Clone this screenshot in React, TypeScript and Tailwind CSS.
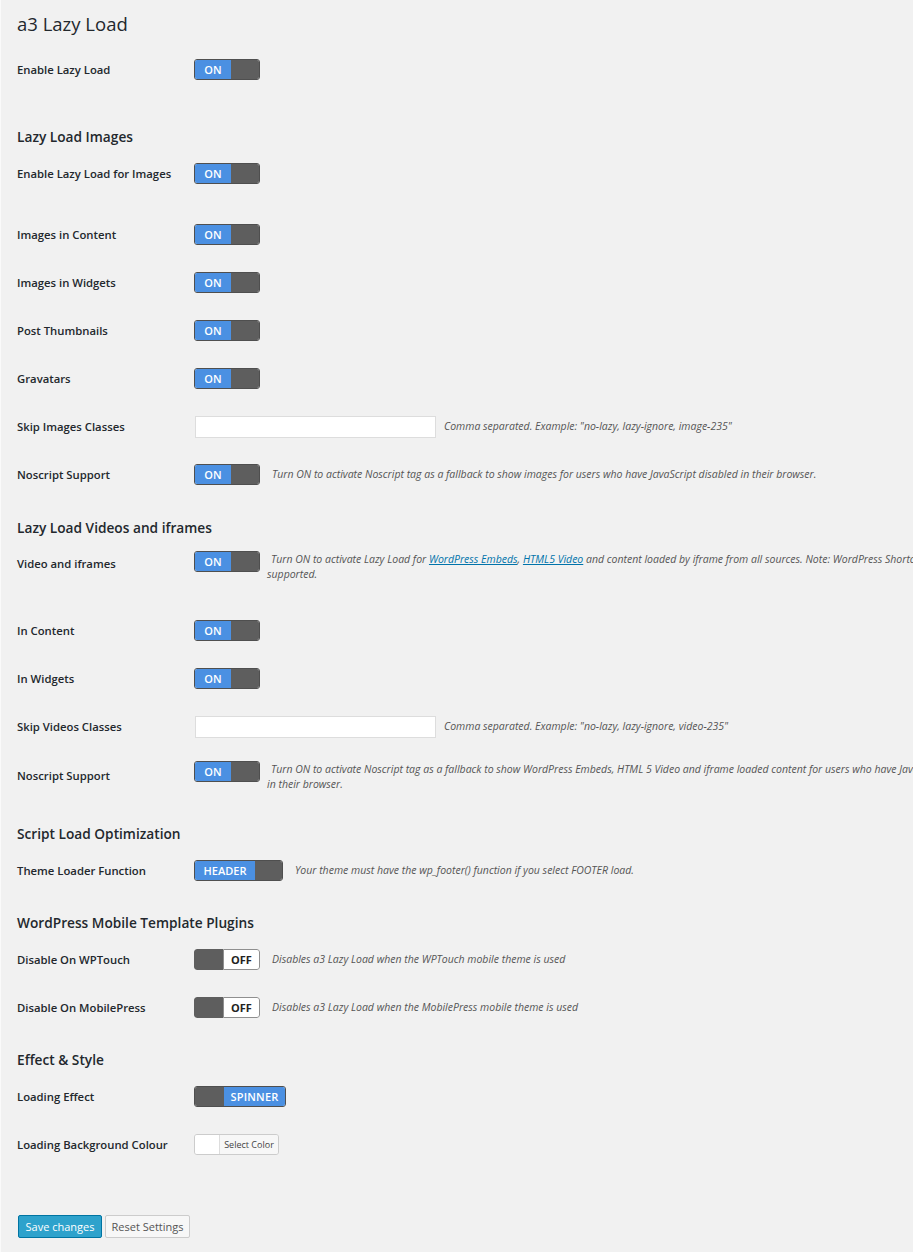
import React from 'react';

type ToggleKind = 'on' | 'off' | 'header' | 'spinner';

function Toggle({ kind }: { kind: ToggleKind }) {
  if (kind === 'off') {
    return (
      <div className="flex h-[21px] w-[66px] rounded-[3px] overflow-hidden">
        <div className="w-[29px] bg-[#5e5e5e] rounded-l-[3px]" />
        <div className="flex-1 flex items-center justify-center bg-white border border-[#8f8f8f] rounded-r-[3px] text-[11px] font-bold text-[#222] leading-none">
          OFF
        </div>
      </div>
    );
  }
  if (kind === 'spinner') {
    return (
      <div className="flex h-[21px] w-[92px] rounded-[3px] overflow-hidden border border-[#4f4f4f]">
        <div className="w-[29px] bg-[#5e5e5e]" />
        <div className="flex-1 flex items-center justify-center bg-[#4b90e2] text-[11px] font-semibold text-white leading-none tracking-[0.2px]">
          SPINNER
        </div>
      </div>
    );
  }
  const header = kind === 'header';
  return (
    <div
      className={`flex h-[21px] rounded-[3px] overflow-hidden border border-[#4f4f4f] ${
        header ? 'w-[89px]' : 'w-[66px]'
      }`}
    >
      <div
        className={`flex items-center justify-center bg-[#4b90e2] text-[11px] font-semibold text-white leading-none ${
          header ? 'w-[60px]' : 'w-[36px]'
        }`}
      >
        {header ? 'HEADER' : 'ON'}
      </div>
      <div className="flex-1 bg-[#5e5e5e]" />
    </div>
  );
}

function Desc({ children, wide }: { children: React.ReactNode; wide?: boolean }) {
  return (
    <div
      className={`text-[10.5px] italic leading-[15px] text-[#555] ${
        wide ? 'w-[726px] shrink-0 ml-[7px] indent-[4px] pt-[1px]' : 'ml-[12px]'
      }`}
    >
      {children}
    </div>
  );
}

function Row({
  label,
  children,
}: {
  label: string;
  children: React.ReactNode;
}) {
  return (
    <div className="flex h-[48px]">
      <div className="w-[177px] shrink-0 pt-[14px] text-[11.3px] font-semibold leading-[20px] text-[#23282d]">
        {label}
      </div>
      <div className="flex items-center h-[47px]">{children}</div>
    </div>
  );
}

function Heading({ children, className = '' }: { children: React.ReactNode; className?: string }) {
  return (
    <div
      className={`h-[26px] flex items-center text-[13.7px] font-semibold text-[#23282d] ${className}`}
    >
      {children}
    </div>
  );
}

function TextInput() {
  return <div className="h-[22px] w-[241px] bg-white border border-[#dddddd] ml-[1px]" />;
}

export default function App() {
  return (
    <div className="min-h-[1252px] w-[913px] overflow-hidden bg-[#f1f1f1] border-l border-[#fafafa] pl-[16px] font-['Open_Sans',sans-serif]">
      <h1 className="pt-[10px] h-[46px] text-[18.5px] leading-[28px] font-normal text-[#23282d]">
        a3 Lazy Load
      </h1>

      <Row label="Enable Lazy Load">
        <Toggle kind="on" />
      </Row>

      <Heading className="mt-[30px]">Lazy Load Images</Heading>
      <Row label="Enable Lazy Load for Images">
        <Toggle kind="on" />
      </Row>

      <div className="mt-[13px]">
        <Row label="Images in Content">
          <Toggle kind="on" />
        </Row>
        <Row label="Images in Widgets">
          <Toggle kind="on" />
        </Row>
        <Row label="Post Thumbnails">
          <Toggle kind="on" />
        </Row>
        <Row label="Gravatars">
          <Toggle kind="on" />
        </Row>
        <Row label="Skip Images Classes">
          <TextInput />
          <Desc>
            <span className="ml-[-4px]">Comma separated. Example: "no-lazy, lazy-ignore, image-235"</span>
          </Desc>
        </Row>
        <Row label="Noscript Support">
          <Toggle kind="on" />
          <Desc>
            Turn ON to activate Noscript tag as a fallback to show images for users who have JavaScript
            disabled in their browser.
          </Desc>
        </Row>
      </div>

      <Heading className="mt-[16px]">Lazy Load Videos and iframes</Heading>
      <div className="flex h-[66px] pt-[10px]">
        <div className="w-[177px] shrink-0 pt-[3px] text-[11.3px] font-semibold leading-[20px] text-[#23282d]">
          Video and iframes
        </div>
        <div className="shrink-0">
          <Toggle kind="on" />
        </div>
        <Desc wide>
          Turn ON to activate Lazy Load for{' '}
          <span className="text-[#0073aa] underline">WordPress Embeds</span>,{' '}
          <span className="text-[#0073aa] underline">HTML5 Video</span> and content loaded by iframe from
          all sources. Note: WordPress Shortcodes will not be supported.
        </Desc>
      </div>

      <Row label="In Content">
        <Toggle kind="on" />
      </Row>
      <Row label="In Widgets">
        <Toggle kind="on" />
      </Row>
      <Row label="Skip Videos Classes">
        <TextInput />
        <Desc>
          <span className="ml-[-4px]">Comma separated. Example: "no-lazy, lazy-ignore, video-235"</span>
        </Desc>
      </Row>
      <div className="flex h-[70px] pt-[10px]">
        <div className="w-[177px] shrink-0 pt-[5px] text-[11.3px] font-semibold leading-[20px] text-[#23282d]">
          Noscript Support
        </div>
        <div className="shrink-0">
          <Toggle kind="on" />
        </div>
        <Desc wide>
          Turn ON to activate Noscript tag as a fallback to show WordPress Embeds, HTML 5 Video and iframe
          loaded content for users who have JavaScript disabled in their browser.
        </Desc>
      </div>

      <Heading>Script Load Optimization</Heading>
      <Row label="Theme Loader Function">
        <Toggle kind="header" />
        <Desc>Your theme must have the wp_footer() function if you select FOOTER load.</Desc>
      </Row>

      <Heading className="mt-[15px]">WordPress Mobile Template Plugins</Heading>
      <Row label="Disable On WPTouch">
        <Toggle kind="off" />
        <Desc>Disables a3 Lazy Load when the WPTouch mobile theme is used</Desc>
      </Row>
      <Row label="Disable On MobilePress">
        <Toggle kind="off" />
        <Desc>Disables a3 Lazy Load when the MobilePress mobile theme is used</Desc>
      </Row>

      <Heading className="mt-[15px]">Effect &amp; Style</Heading>
      <Row label="Loading Effect">
        <Toggle kind="spinner" />
      </Row>
      <Row label="Loading Background Colour">
        <div className="flex h-[21px] w-[85px] rounded-[3px] border border-[#cccccc] overflow-hidden">
          <div className="w-[25px] bg-white border-r border-[#dddddd]" />
          <div className="flex-1 flex items-center justify-center bg-[#f7f7f7] text-[9px] text-[#444] leading-none">
            Select Color
          </div>
        </div>
      </Row>

      <div className="flex gap-[3px] mt-[46px] pl-[1px]">
        <button className="h-[23px] w-[84px] rounded-[2px] bg-[#2ea2cc] border border-[#0074a2] text-[11px] text-white leading-none">
          Save changes
        </button>
        <button className="h-[23px] w-[85px] rounded-[2px] bg-[#f7f7f7] border border-[#cccccc] text-[11px] text-[#555] leading-none">
          Reset Settings
        </button>
      </div>
    </div>
  );
}
